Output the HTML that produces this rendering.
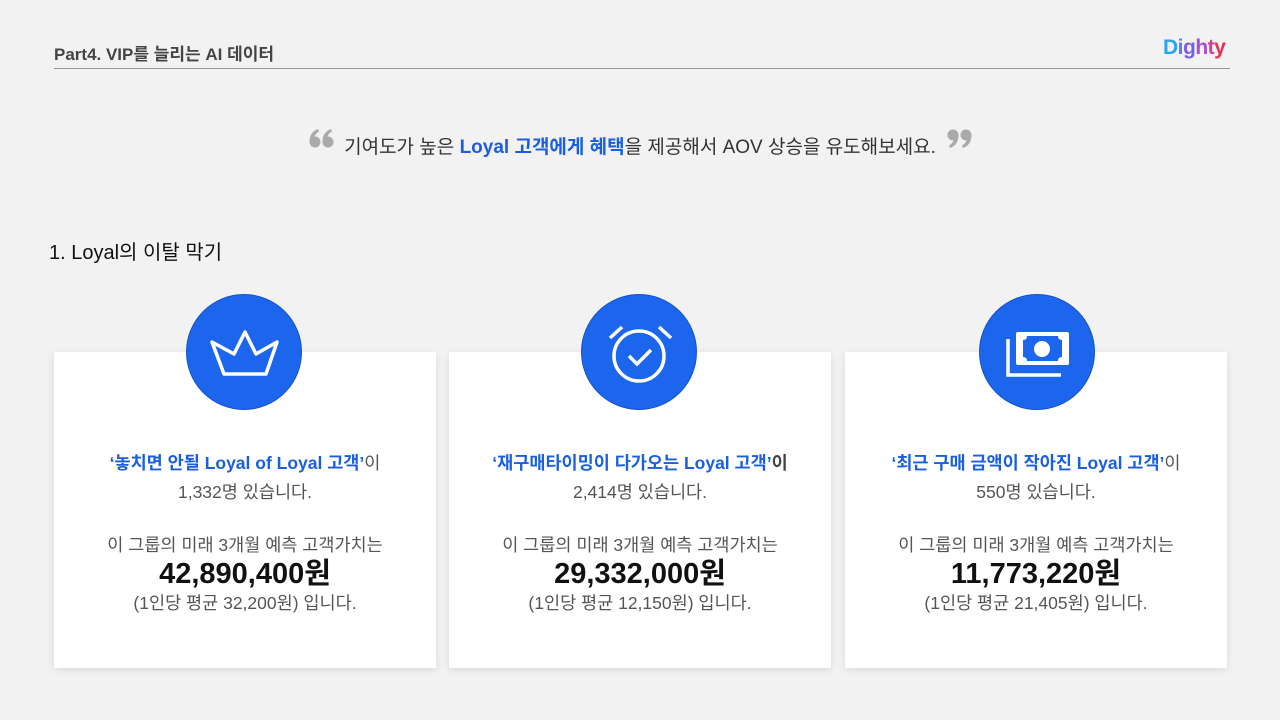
<!DOCTYPE html>
<html><head><meta charset="utf-8"><style>
*{margin:0;padding:0;box-sizing:border-box}
body{width:1280px;height:720px;background:#f2f2f2;font-family:"Liberation Sans","Noto Sans CJK KR",sans-serif;position:relative;overflow:hidden;color:#333}
.hdr{position:absolute;left:54px;top:40px;font-size:17px;font-weight:bold;color:#444}
.line{position:absolute;left:54px;top:68px;width:1176px;height:1px;background:#999}
.logo{position:absolute;left:1163px;top:36px;font-size:21px;font-weight:bold;letter-spacing:-0.5px}
.quote{position:absolute;left:0;width:1280px;top:132px;text-align:center;font-size:19px;color:#333}
.qm{position:absolute;top:128px}
.b{color:#1a5fe0;font-weight:bold}
.sec{position:absolute;left:49px;top:236px;font-size:20px;color:#111}
.card{position:absolute;top:352px;width:382px;height:316px;background:#fff;box-shadow:0 2px 8px rgba(0,0,0,.1);text-align:center;font-size:17.5px;color:#555;padding-top:97px;line-height:29px}
.card .t{color:#1a5fe0;font-weight:bold}
.card .t2{color:#444;font-weight:bold}
.big{font-size:29px;font-weight:bold;color:#111;line-height:29px}
.circ{position:absolute;top:294px;width:116px;height:116px;border-radius:50%;background:#1c66ee;border:1px solid #1552c6}
.circ svg{position:absolute;left:0;top:0}
</style></head><body>
<div class="hdr">Part4. VIP를 늘리는 AI 데이터</div>
<div class="line"></div>
<div class="logo"><span style="color:#2aa3f0">D</span><span style="color:#5a7af0">i</span><span style="color:#7a5ee8">g</span><span style="color:#a24ed8">h</span><span style="color:#d0409a">t</span><span style="color:#e83050">y</span></div>
<div class="quote">기여도가 높은 <span class="b">Loyal 고객에게 혜택</span>을 제공해서 AOV 상승을 유도해보세요.</div>
<svg class="qm" style="left:309px" width="25" height="21" viewBox="0 0 25 21"><g fill="#aaa"><circle cx="6" cy="14" r="5.5"/><path d="M0.5 14 Q0.5 4 9 1 L10 3.5 Q5 6 5 12 Z"/><circle cx="19" cy="14" r="5.5"/><path d="M13.5 14 Q13.5 4 22 1 L23 3.5 Q18 6 18 12 Z"/></g></svg>
<svg class="qm" style="left:947px" width="25" height="21" viewBox="0 0 25 21"><g fill="#aaa" transform="rotate(180 12.5 10.5)"><circle cx="6" cy="14" r="5.5"/><path d="M0.5 14 Q0.5 4 9 1 L10 3.5 Q5 6 5 12 Z"/><circle cx="19" cy="14" r="5.5"/><path d="M13.5 14 Q13.5 4 22 1 L23 3.5 Q18 6 18 12 Z"/></g></svg>
<div class="sec">1. Loyal의 이탈 막기</div>

<div class="card" style="left:54px"><div><span class="t">‘놓치면 안될 Loyal of Loyal 고객’</span>이</div><div>1,332명 있습니다.</div><div style="height:24px"></div><div>이 그룹의 미래 3개월 예측 고객가치는</div><div class="big">42,890,400원</div><div>(1인당 평균 32,200원) 입니다.</div></div>
<div class="card" style="left:449px"><div><span class="t">‘재구매타이밍이 다가오는 Loyal 고객’</span><span class="t2">이</span></div><div>2,414명 있습니다.</div><div style="height:24px"></div><div>이 그룹의 미래 3개월 예측 고객가치는</div><div class="big">29,332,000원</div><div>(1인당 평균 12,150원) 입니다.</div></div>
<div class="card" style="left:845px"><div><span class="t">‘최근 구매 금액이 작아진 Loyal 고객’</span>이</div><div>550명 있습니다.</div><div style="height:24px"></div><div>이 그룹의 미래 3개월 예측 고객가치는</div><div class="big">11,773,220원</div><div>(1인당 평균 21,405원) 입니다.</div></div>

<div class="circ" style="left:186px"><svg width="116" height="116" viewBox="186 294 116 116"><path d="M211 341 L233 353 L244 331 L255 353 L276 341 L265 373 L223 373 Z" fill="none" stroke="#fff" stroke-width="3.5" stroke-linejoin="round"/></svg></div>
<div class="circ" style="left:581px"><svg width="116" height="116" viewBox="581 294 116 116"><circle cx="638" cy="355" r="25" fill="none" stroke="#fff" stroke-width="3.5"/><path d="M628 355 L636 363 L650 349" fill="none" stroke="#fff" stroke-width="3.5"/><path d="M609 337 L621 326 M658 326 L670 337" stroke="#fff" stroke-width="3.5"/></svg></div>
<div class="circ" style="left:979px"><svg width="116" height="116" viewBox="979 294 116 116"><rect x="1015" y="331" width="53" height="33" rx="2" fill="#fff"/><path d="M1022 339 Q1026 339 1026 335 L1057 335 Q1057 339 1061 339 L1061 356 Q1057 356 1057 360 L1026 360 Q1026 356 1022 356 Z" fill="#1c66ee"/><circle cx="1041" cy="348" r="8" fill="#fff"/><path d="M1007 338 L1007 374 L1060 374" fill="none" stroke="#fff" stroke-width="3.5"/></svg></div>
</body></html>
